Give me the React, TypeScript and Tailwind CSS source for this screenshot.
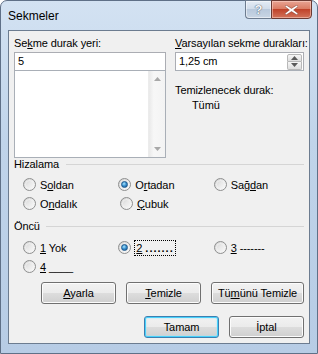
import React from "react";

const font = { fontFamily: '"Liberation Sans", Arial, sans-serif' };

function Radio({ checked }: { checked?: boolean }) {
  return (
    <span className="relative inline-block w-[13px] h-[13px] shrink-0 rounded-full border border-[#8e8f8f] bg-[linear-gradient(135deg,#cfcfcf_0%,#e8e8e8_45%,#fbfbfb_100%)]">
      <span className="absolute inset-[1px] rounded-full border border-[#f4f4f4]/70" />
      {checked && (
        <span className="absolute left-[2px] top-[2px] w-[7px] h-[7px] rounded-full bg-[radial-gradient(circle_at_40%_35%,#aee6fb_0%,#3d95d3_45%,#0f4c86_100%)] border border-[#1f5a8e]" />
      )}
    </span>
  );
}

function RadioItem({
  checked,
  children,
  focus,
}: {
  checked?: boolean;
  children: React.ReactNode;
  focus?: boolean;
}) {
  return (
    <div className="w-[97px] flex items-center h-[19px]">
      <Radio checked={checked} />
      {focus ? (
        <span className="ml-[3px] inline-block border border-dotted border-black px-[1px] h-[16px] leading-[14px] whitespace-pre">
          {children}
        </span>
      ) : (
        <span className="ml-[4px] leading-[14px] whitespace-pre">{children}</span>
      )}
    </div>
  );
}

function Btn({
  children,
  w,
  def,
}: {
  children: React.ReactNode;
  w: string;
  def?: boolean;
}) {
  return (
    <div
      className={
        "h-[22px] rounded-[3px] border flex items-center justify-center bg-[linear-gradient(#f2f2f2_0%,#ebebeb_50%,#dddddd_50%,#cfcfcf_100%)] " +
        w +
        (def
          ? " border-[#3c7fb1] shadow-[inset_0_0_0_1px_#48d1fb,inset_0_0_2px_1px_#9fe3fb]"
          : " border-[#707070] shadow-[inset_0_0_0_1px_#fcfcfc]")
      }
    >
      <span className="leading-[14px]">{children}</span>
    </div>
  );
}

function Arrow({ up, color = "#a0a0a0" }: { up?: boolean; color?: string }) {
  return (
    <svg width="7" height="4" viewBox="0 0 7 4">
      {up ? (
        <path d="M0 4 L3.5 0 L7 4 Z" fill={color} />
      ) : (
        <path d="M0 0 L3.5 4 L7 0 Z" fill={color} />
      )}
    </svg>
  );
}

export default function App() {
  return (
    <div
      style={font}
      className="w-[318px] h-[354px] text-[11px] text-black tracking-[-0.1px] overflow-hidden"
    >
      <div className="w-[318px] h-[354px] rounded-t-[7px] border border-[#5f7087] bg-[linear-gradient(180deg,#d3e2f2_0%,#c0d4ea_40%,#b7cce5_100%)] flex flex-col">
        {/* Title bar */}
        <div className="h-[29px] flex items-start relative">
          <span className="ml-[7px] mt-[8px] text-[12px] tracking-normal leading-[14px] text-black">
            Sekmeler
          </span>
          <div className="absolute right-[5px] top-[-1px] flex">
            <div className="w-[26px] h-[19px] rounded-bl-[4px] border border-[#6d7c8f] border-r-0 bg-[linear-gradient(#e4ecf5_0%,#cfdbe9_50%,#b9c9dc_50%,#c9d6e4_100%)] flex items-center justify-center shadow-[inset_0_0_0_1px_rgba(255,255,255,0.5)]">
              <span className="text-[13px] font-bold text-[#f4f7fa] leading-none tracking-normal [text-shadow:0_0_1px_#4a5868,0_0_1px_#4a5868]">?</span>
            </div>
            <div className="w-[41px] h-[19px] rounded-br-[4px] border border-[#6b3a33] bg-[linear-gradient(#e8a494_0%,#d9785f_50%,#c0432a_50%,#d2735a_100%)] flex items-center justify-center shadow-[inset_0_0_0_1px_rgba(255,220,210,0.5)]">
              <svg width="13" height="10" viewBox="0 0 13 10">
                <path
                  d="M1 0 L6.5 3.4 L12 0 L13 1.6 L8.6 5 L13 8.4 L12 10 L6.5 6.6 L1 10 L0 8.4 L4.4 5 L0 1.6 Z"
                  fill="#ffffff"
                  stroke="#7a3a2e"
                  strokeWidth="0.5"
                />
              </svg>
            </div>
          </div>
        </div>

        {/* Client area */}
        <div className="mx-[7px] h-[314px] border border-[#6c7c90] bg-[#f0f0f0] flex flex-col pl-[5px] pt-[5px]">
          {/* Top section */}
          <div className="flex w-[290px]">
            <div className="w-[152px] flex flex-col">
              <div className="h-[16px] leading-[14px]">
                Se<u>k</u>me durak yeri:
              </div>
              <div className="h-[19px] bg-white border border-[#abadb3] border-b-[#a9afb7] flex items-center pl-[3px]">
                5
              </div>
              <div className="h-[87px] bg-white border border-t-0 border-[#a9afb7] flex justify-end">
                <div className="w-[17px] h-full bg-[linear-gradient(90deg,#e9e9e9_0%,#f7f7f7_30%,#f3f3f3_100%)] border-l border-[#ececec] flex flex-col justify-between items-center py-[6px]">
                  <Arrow up color="#a8a8a8" />
                  <Arrow color="#a8a8a8" />
                </div>
              </div>
            </div>
            <div className="w-[129px] ml-[9px] flex flex-col">
              <div className="h-[16px] leading-[14px] whitespace-nowrap">
                <u>V</u>arsayılan sekme durakları:
              </div>
              <div className="h-[19px] bg-white border border-[#abadb3] border-b-[#a9afb7] flex items-center pl-[3px] pr-[1px]">
                <span className="flex-1">1,25 cm</span>
                <div className="w-[15px] h-[16px] flex flex-col">
                  <div className="h-[8px] border border-[#b8b8b8] rounded-t-[2px] bg-[linear-gradient(#f6f6f6,#dedede)] flex items-center justify-center">
                    <Arrow up color="#5a5a5a" />
                  </div>
                  <div className="h-[8px] border border-t-0 border-[#b8b8b8] rounded-b-[2px] bg-[linear-gradient(#f6f6f6,#dedede)] flex items-center justify-center">
                    <Arrow color="#5a5a5a" />
                  </div>
                </div>
              </div>
              <div className="mt-[12px] leading-[14px]">Temizlenecek durak:</div>
              <div className="mt-[1px] ml-[17px] leading-[14px]">Tümü</div>
            </div>
          </div>

          {/* Hizalama */}
          <div className="w-[290px] h-[12px] flex items-center">
            <span className="leading-[12px]">Hizalama</span>
            <div className="flex-1 ml-[7px] h-px bg-[#d5d5d5]" />
          </div>
          <div className="mt-[5px] pl-[9px] flex flex-col">
            <div className="flex">
              <RadioItem>
                S<u>o</u>ldan
              </RadioItem>
              <RadioItem checked>
                O<u>r</u>tadan
              </RadioItem>
              <RadioItem>
                Sağ<u>d</u>an
              </RadioItem>
            </div>
            <div className="flex">
              <RadioItem>
                O<u>n</u>dalık
              </RadioItem>
              <RadioItem>
                <u>Ç</u>ubuk
              </RadioItem>
            </div>
          </div>

          {/* Öncü */}
          <div className="mt-[7px] w-[290px] h-[12px] flex items-center">
            <span className="leading-[12px]">Öncü</span>
            <div className="flex-1 ml-[6px] h-px bg-[#d5d5d5]" />
          </div>
          <div className="mt-[6px] pl-[9px] flex flex-col">
            <div className="flex">
              <RadioItem>
                <u>1</u> Yok
              </RadioItem>
              <RadioItem checked focus>
                <u>2</u> <span className="font-bold tracking-[1px]">.......</span>
              </RadioItem>
              <RadioItem>
                <u>3</u> -------
              </RadioItem>
            </div>
            <div className="flex">
              <RadioItem>
                <u>4</u> ____
              </RadioItem>
            </div>
          </div>

          {/* Buttons */}
          <div className="mt-[6px] w-[290px] flex justify-end gap-[10px]">
            <Btn w="w-[75px]">
              <u>A</u>yarla
            </Btn>
            <Btn w="w-[75px]">
              <u>T</u>emizle
            </Btn>
            <Btn w="w-[93px]">
              Tü<u>m</u>ünü Temizle
            </Btn>
          </div>
          <div className="mt-[12px] w-[290px] flex justify-end gap-[10px]">
            <Btn w="w-[75px]" def>
              Tamam
            </Btn>
            <Btn w="w-[75px]">İptal</Btn>
          </div>
        </div>
      </div>
    </div>
  );
}
